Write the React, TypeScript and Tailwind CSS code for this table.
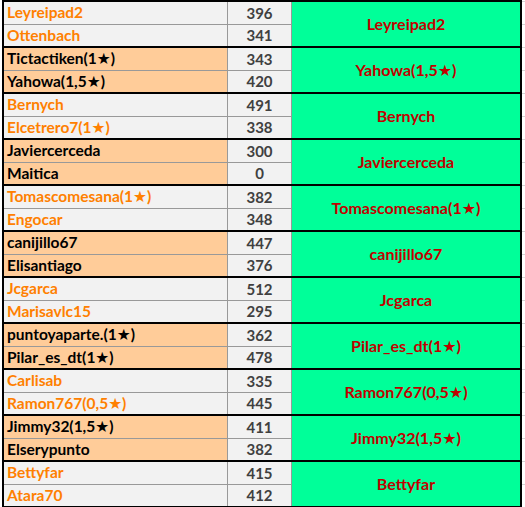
type Row = { name: string; score: number };
type Match = { a: Row; b: Row; winner: string; peach: boolean };

const matches: Match[] = [
  { a: { name: "Leyreipad2", score: 396 }, b: { name: "Ottenbach", score: 341 }, winner: "Leyreipad2", peach: false },
  { a: { name: "Tictactiken(1★)", score: 343 }, b: { name: "Yahowa(1,5★)", score: 420 }, winner: "Yahowa(1,5★)", peach: true },
  { a: { name: "Bernych", score: 491 }, b: { name: "Elcetrero7(1★)", score: 338 }, winner: "Bernych", peach: false },
  { a: { name: "Javiercerceda", score: 300 }, b: { name: "Maitica", score: 0 }, winner: "Javiercerceda", peach: true },
  { a: { name: "Tomascomesana(1★)", score: 382 }, b: { name: "Engocar", score: 348 }, winner: "Tomascomesana(1★)", peach: false },
  { a: { name: "canijillo67", score: 447 }, b: { name: "Elisantiago", score: 376 }, winner: "canijillo67", peach: true },
  { a: { name: "Jcgarca", score: 512 }, b: { name: "Marisavlc15", score: 295 }, winner: "Jcgarca", peach: false },
  { a: { name: "puntoyaparte.(1★)", score: 362 }, b: { name: "Pilar_es_dt(1★)", score: 478 }, winner: "Pilar_es_dt(1★)", peach: true },
  { a: { name: "Carlisab", score: 335 }, b: { name: "Ramon767(0,5★)", score: 445 }, winner: "Ramon767(0,5★)", peach: false },
  { a: { name: "Jimmy32(1,5★)", score: 411 }, b: { name: "Elserypunto", score: 382 }, winner: "Jimmy32(1,5★)", peach: true },
  { a: { name: "Bettyfar", score: 415 }, b: { name: "Atara70", score: 412 }, winner: "Bettyfar", peach: false },
];

const font = { fontFamily: "Lato, 'DejaVu Sans', sans-serif" };

export default function App() {
  return (
    <div className="w-[525px] h-[507px] overflow-hidden bg-white" style={font}>
      {/* top edge */}
      <div className="flex">
        <div className="w-[2px]" />
        <div className="w-[520px] h-[2px] bg-black" />
        <div className="w-[3px] h-[2px] border-b border-[#d4d4d4]" />
      </div>
      {matches.map((m, i) => (
        <Group key={i} m={m} />
      ))}
    </div>
  );
}

function Group({ m }: { m: Match }) {
  return (
    <div className="flex">
      <div className="w-[2px]" />
      <div className="w-[520px] flex border-l-2 border-r-2 border-b-2 border-black">
        <div className="flex flex-col">
          <Line row={m.a} peach={m.peach} first />
          <Line row={m.b} peach={m.peach} />
        </div>
        <div className="flex-1 bg-[#00ff99] flex items-center justify-center text-[16px] font-bold text-[#c00000]">
          {m.winner}
        </div>
      </div>
      <div className="w-[3px] flex flex-col">
        <div className="h-[23px] border-b border-[#d4d4d4]" />
        <div className="h-[23px] border-b border-[#d4d4d4]" />
      </div>
    </div>
  );
}

function Line({ row, peach, first }: { row: Row; peach: boolean; first?: boolean }) {
  return (
    <div className={first ? "flex h-[23px] border-b border-[#999999]" : "flex h-[21px]"}>
      <div
        className={
          peach
            ? "w-[224px] border-r border-[#999999] bg-[#ffcc99] pl-[3px] flex items-center text-[15.5px] font-bold text-black"
            : "w-[224px] border-r border-[#999999] bg-[#f2f2f2] pl-[3px] flex items-center text-[15.5px] font-bold text-[#ff8000]"
        }
      >
        {row.name}
      </div>
      <div className="w-[64px] border-r border-[#999999] bg-[#f2f2f2] flex items-center justify-center text-[15px] font-bold text-[#404040]">
        {row.score}
      </div>
    </div>
  );
}
